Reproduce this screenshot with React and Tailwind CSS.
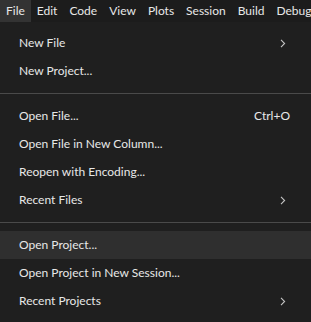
import React from "react";

const Chevron = () => (
  <svg width="6" height="9" viewBox="0 0 6 9" className="mr-[4px] text-[#c4c4c4]">
    <path d="M1 0.8 L4.6 4.5 L1 8.2" fill="none" stroke="currentColor" strokeWidth="1.1" />
  </svg>
);

function Item({ label, shortcut, sub, active }) {
  return (
    <div className={`flex h-[28px] items-center justify-between pl-[19px] pr-[21px] ${active ? "bg-[#2f2f2f]" : ""}`}>
      <span>{label}</span>
      {shortcut && <span>{shortcut}</span>}
      {sub && <Chevron />}
    </div>
  );
}

const Sep = () => <div className="my-[8px] h-px bg-[#4a4a4a]" />;

export default function App() {
  const menus = ["File", "Edit", "Code", "View", "Plots", "Session", "Build", "Debug"];
  return (
    <div className="h-[322px] w-[311px] overflow-hidden bg-[#1f1f1f] text-[12px] text-[#e8e8e8]" style={{ fontFamily: 'Lato, "Open Sans", sans-serif' }}>
      <div className="flex h-[22px] items-center bg-[#1c1c1c] whitespace-nowrap">
        {menus.map((m, i) => (
          <div key={m} className={`flex h-full items-center px-[6px] ${i === 0 ? "bg-[#333333]" : ""}`}>
            {m}
          </div>
        ))}
      </div>
      <div className="pt-[7px]">
        <Item label="New File" sub />
        <Item label="New Project..." />
        <Sep />
        <Item label="Open File..." shortcut="Ctrl+O" />
        <Item label="Open File in New Column..." />
        <Item label="Reopen with Encoding..." />
        <Item label="Recent Files" sub />
        <Sep />
        <Item label="Open Project..." active />
        <Item label="Open Project in New Session..." />
        <Item label="Recent Projects" sub />
      </div>
    </div>
  );
}
